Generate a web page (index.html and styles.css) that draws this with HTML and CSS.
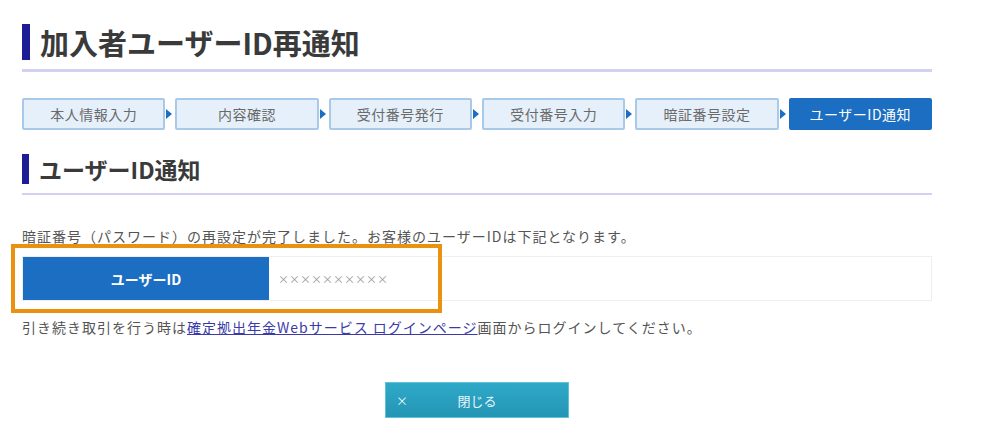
FILE: index.html
```html
<!DOCTYPE html>
<html lang="ja">
<head>
<meta charset="utf-8">
<title>加入者ユーザーID再通知</title>
<link rel="stylesheet" href="styles.css">
</head>
<body>
<div class="page">
  <h1 class="title"><span class="bar"></span>加入者ユーザーID再通知</h1>

  <ol class="steps">
    <li class="step">本人情報入力</li>
    <li class="arrow"><span></span></li>
    <li class="step">内容確認</li>
    <li class="arrow"><span></span></li>
    <li class="step">受付番号発行</li>
    <li class="arrow"><span></span></li>
    <li class="step">受付番号入力</li>
    <li class="arrow"><span></span></li>
    <li class="step">暗証番号設定</li>
    <li class="arrow"><span></span></li>
    <li class="step active">ユーザーID通知</li>
  </ol>

  <h2 class="subtitle"><span class="bar"></span>ユーザーID通知</h2>

  <p class="msg">暗証番号（パスワード）の再設定が完了しました。お客様のユーザーIDは下記となります。</p>

  <div class="idwrap">
    <div class="idrow">
      <div class="idhead">ユーザーID</div>
      <div class="idval">××××××××××</div>
    </div>
    <div class="highlight"></div>
  </div>

  <p class="msg note">引き続き取引を行う時は<a href="#" class="link">確定拠出年金Webサービス ログインページ</a>画面からログインしてください。</p>

  <div class="actions">
    <button class="close"><span class="x">×</span><span class="label">閉じる</span></button>
  </div>
</div>
</body>
</html>
```

FILE: styles.css
```css
* { box-sizing: border-box; }
html, body { margin: 0; padding: 0; background: #fff; }
body {
  font-family: "Noto Sans CJK JP", "Noto Sans", sans-serif;
  color: #555;
}
.page {
  width: 910px;
  margin-left: 22px;
  padding-top: 24px;
}
.title {
  display: flex;
  align-items: flex-start;
  margin: 0;
  height: 48px;
  font-size: 29px;
  line-height: 36px;
  font-weight: 700;
  color: #3a3a3a;
  border-bottom: 3px solid #d3d1f1;
}
.title .bar {
  flex: none;
  width: 8px;
  height: 36px;
  background: #1d1d95;
  margin-right: 10px;
}

.steps {
  list-style: none;
  margin: 26px 0 0;
  padding: 0;
  display: flex;
  height: 32px;
}
.step {
  flex: 1;
  display: flex;
  align-items: center;
  justify-content: center;
  background: #e6f0fa;
  border: 2px solid #a9c9e8;
  border-radius: 2px;
  font-size: 14px;
  letter-spacing: 0.5px;
  color: #6a6a6a;
}
.step.active {
  background: #1b6ec1;
  border-color: #1b6ec1;
  color: #fff;
}
.arrow {
  width: 10px;
  display: flex;
  align-items: center;
}
.arrow span {
  display: block;
  margin-left: 1px;
  width: 0;
  height: 0;
  border-top: 5px solid transparent;
  border-bottom: 5px solid transparent;
  border-left: 6px solid #1b6ec1;
}

.subtitle {
  display: flex;
  align-items: flex-start;
  margin: 24px 0 0;
  height: 41px;
  font-size: 23px;
  line-height: 30px;
  font-weight: 700;
  color: #3a3a3a;
  border-bottom: 2px solid #d3d1f1;
}
.subtitle .bar {
  flex: none;
  width: 7px;
  height: 30px;
  background: #1d1d95;
  margin-right: 10px;
}

.msg {
  margin: 32px 0 0;
  font-size: 14px;
  line-height: 18px;
  letter-spacing: 1px;
  color: #555;
}

.idwrap {
  position: relative;
  margin-top: 11px;
}
.idrow {
  display: flex;
  height: 45px;
  border: 1px solid #eeeeee;
}
.idhead {
  width: 246px;
  background: #1b6ec1;
  color: #fff;
  font-size: 14px;
  font-weight: 700;
  display: flex;
  align-items: center;
  justify-content: center;
}
.idval {
  flex: 1;
  display: flex;
  align-items: center;
  padding-left: 9px;
  font-size: 11px;
  color: #999;
}
.highlight {
  position: absolute;
  left: -11px;
  top: -12px;
  width: 431px;
  height: 69px;
  border: 4px solid #ea920f;
  pointer-events: none;
}

.note { margin-top: 17px; }
.link {
  color: #3b3ba8;
  text-decoration: underline;
}

.actions {
  display: flex;
  justify-content: center;
  margin-top: 46px;
}
.close {
  position: relative;
  width: 184px;
  height: 36px;
  border: 1px solid #5fc0d8;
  background: linear-gradient(#2fa9c8, #2495b5);
  color: #e8f6fa;
  font-family: inherit;
  font-size: 13px;
  display: flex;
  align-items: center;
  justify-content: center;
  padding: 0;
  cursor: pointer;
}
.close .x {
  position: absolute;
  left: 10px;
  font-size: 12px;
}
```
